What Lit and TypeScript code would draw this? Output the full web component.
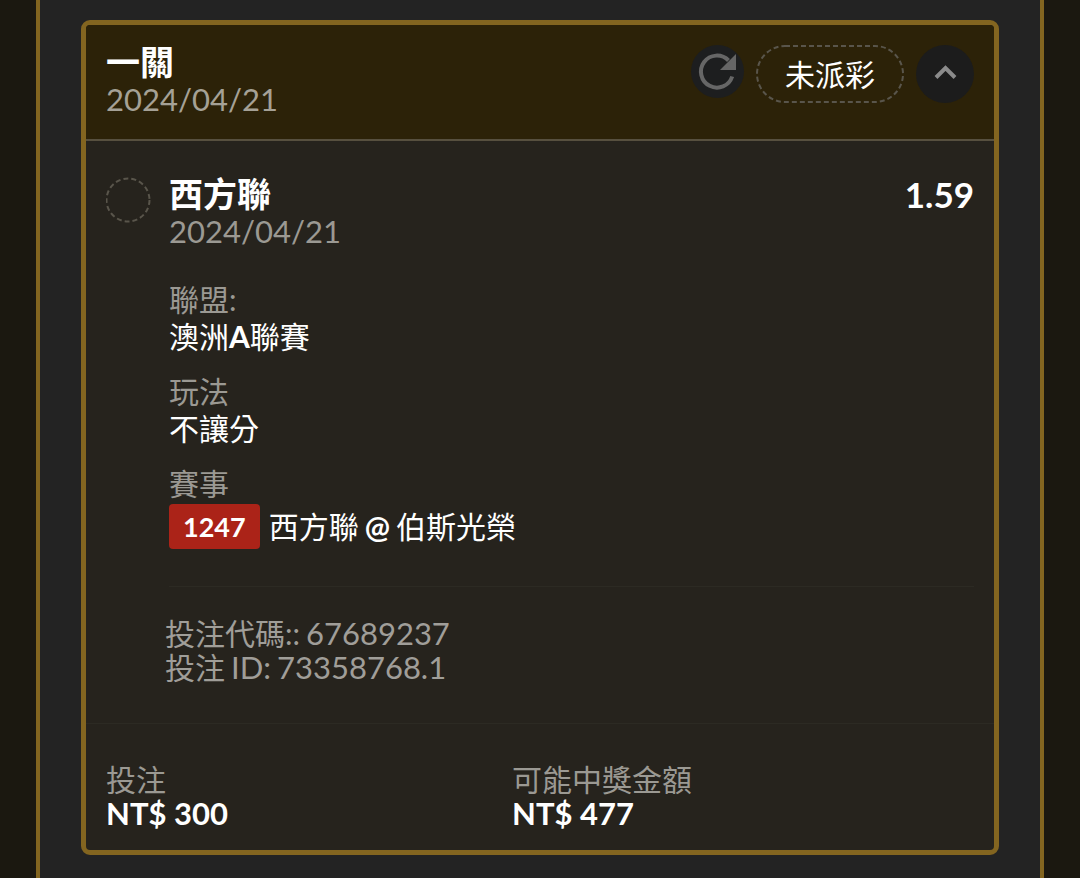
import { LitElement, html, css } from "lit";
import { customElement, property, state } from "lit/decorators.js";

interface Leg {
  team: string;
  date: string;
  odds: string;
  code: string;
  home: string;
  away: string;
}

@customElement("bet-card")
class BetCard extends LitElement {
  static styles = css`
    :host {
      display: block;
      box-sizing: border-box;
      border: 5px solid #836520;
      border-radius: 9px;
      background: #26231d;
      color: #fff;
      overflow: hidden;
    }
    * {
      box-sizing: border-box;
    }
    h2,
    h3,
    p,
    dl,
    dd {
      margin: 0;
    }
    .header {
      display: flex;
      justify-content: space-between;
      align-items: flex-start;
      padding: 20px;
      background: #2c2208;
      border-bottom: 2px solid #57503f;
    }
    .title {
      font-size: 34px;
      line-height: 34px;
      font-weight: 700;
    }
    .date {
      font-size: 31px;
      line-height: 40px;
      color: #a5a196;
    }
    .leg .date {
      color: #9b9993;
    }
    .actions {
      display: flex;
      align-items: flex-start;
      gap: 12px;
    }
    button {
      display: flex;
      align-items: center;
      justify-content: center;
      padding: 0;
      border: 0;
      border-radius: 50%;
      cursor: pointer;
    }
    .refresh {
      width: 53px;
      height: 53px;
      background: #1d1e1f;
    }
    .toggle {
      width: 58px;
      height: 58px;
      background: #1c1c1c;
    }
    .toggle.closed svg {
      transform: rotate(180deg);
    }
    .outline {
      fill: none;
      stroke: #59554b;
      stroke-width: 2;
      stroke-dasharray: 5 3;
    }
    .status {
      position: relative;
      display: flex;
      align-items: center;
      height: 58px;
      padding: 0 29px;
      font-size: 30px;
      line-height: 34px;
    }
    .status .frame {
      position: absolute;
      inset: 0;
      width: 100%;
      height: 100%;
    }
    .status .outline {
      x: 1px;
      y: 1px;
      width: calc(100% - 2px);
      height: calc(100% - 2px);
    }
    .leg {
      display: grid;
      grid-template-columns: 44px 1fr;
      column-gap: 19px;
      padding: 36px 20px 39px;
    }
    .mark {
      width: 46px;
      height: 46px;
    }
    .leg-head {
      display: flex;
      justify-content: space-between;
    }
    .odds {
      font-size: 35px;
      line-height: 34px;
      font-weight: 700;
    }
    .details {
      display: grid;
      row-gap: 18px;
      margin-top: 30px;
      padding-bottom: 37px;
      border-bottom: 1px solid #2c2a23;
    }
    dt {
      font-size: 30px;
      line-height: 37px;
      color: #9b9993;
    }
    dd {
      font-size: 30px;
      line-height: 37px;
    }
    .latin {
      font-weight: 700;
    }
    .match {
      display: flex;
      align-items: center;
      gap: 6px;
      margin-top: 2px;
      line-height: 45px;
    }
    .code {
      margin-right: 3px;
      padding: 0 14px;
      border-radius: 4px;
      background: #ab2318;
      font-size: 27px;
      font-weight: 700;
    }
    .ids {
      grid-column: 2;
      margin: 29px 0 0 -4px;
      font-size: 30px;
      line-height: 34px;
      color: #a09e99;
    }
    .ids p {
      display: flex;
      align-items: baseline;
      gap: 6px;
    }
    .num {
      font-size: 31px;
    }
    .totals {
      display: grid;
      grid-template-columns: 406px 1fr;
      padding: 38px 20px 20px;
      border-top: 1px solid #2c2a23;
    }
    .totals dt,
    .totals dd {
      line-height: 34px;
    }
    .totals dd {
      font-size: 31px;
      font-weight: 700;
    }
  `;

  @property() name = "";
  @property() date = "";
  @property() status = "";
  @property({ attribute: false }) leg!: Leg;
  @state() open = true;

  private toggle() {
    this.open = !this.open;
  }

  private renderLeg() {
    const { team, date, odds, code, home, away } = this.leg;
    return html`
      <section class="leg">
        <svg class="mark" viewBox="0 0 46 46" aria-hidden="true">
          <circle class="outline" cx="22" cy="23" r="21.5" />
        </svg>
        <div>
          <div class="leg-head">
            <div>
              <h3 class="title">${team}</h3>
              <p class="date">${date}</p>
            </div>
            <span class="odds">${odds}</span>
          </div>
          <dl class="details">
            <div>
              <dt>聯盟:</dt>
              <dd>澳洲<span class="latin">A</span>聯賽</dd>
            </div>
            <div>
              <dt>玩法</dt>
              <dd>不讓分</dd>
            </div>
            <div>
              <dt>賽事</dt>
              <dd class="match">
                <span class="code">${code}</span>
                <span>${home}</span>
                <span class="latin">@</span>
                <span>${away}</span>
              </dd>
            </div>
          </dl>
        </div>
        <div class="ids">
          <p><span>投注代碼::</span><span class="num">67689237</span></p>
          <p>
            <span>投注</span><span class="num">ID:</span
            ><span class="num">73358768.1</span>
          </p>
        </div>
      </section>
    `;
  }

  render() {
    return html`
      <header class="header">
        <div>
          <h2 class="title">${this.name}</h2>
          <p class="date">${this.date}</p>
        </div>
        <div class="actions">
          <button class="refresh" type="button" aria-label="重新整理">
            <svg width="53" height="53" viewBox="0 0 53 53" aria-hidden="true">
              <path
                d="M41.2 31.5A16 16 0 1 1 37.5 15.5"
                fill="none"
                stroke="#666"
                stroke-width="4"
              />
              <path d="M45 9V25H29Z" fill="#666" />
            </svg>
          </button>
          <span class="status">
            <svg class="frame" aria-hidden="true">
              <rect class="outline" rx="28" />
            </svg>
            ${this.status}
          </span>
          <button
            class="toggle ${this.open ? "" : "closed"}"
            type="button"
            aria-label="展開或收合"
            aria-expanded=${this.open}
            @click=${this.toggle}
          >
            <svg width="58" height="58" viewBox="0 0 58 58" aria-hidden="true">
              <path
                d="M20 32.5L29.5 23L39 32.5"
                fill="none"
                stroke="#8b8b8b"
                stroke-width="4"
              />
            </svg>
          </button>
        </div>
      </header>
      ${this.open ? this.renderLeg() : ""}
      <dl class="totals">
        <div>
          <dt>投注</dt>
          <dd>NT$ 300</dd>
        </div>
        <div>
          <dt>可能中獎金額</dt>
          <dd>NT$ 477</dd>
        </div>
      </dl>
    `;
  }
}

@customElement("app-root")
class AppRoot extends LitElement {
  static styles = css`
    :host {
      display: block;
      box-sizing: border-box;
      min-height: 100vh;
      padding: 0 36px;
      background: #1b1810;
      font-family: Lato, "Noto Sans CJK TC", sans-serif;
    }
    .panel {
      box-sizing: border-box;
      min-height: 100vh;
      padding: 20px 41px 23px;
      border: solid #836520;
      border-width: 0 4px;
      background: #232323;
    }
  `;

  private leg: Leg = {
    team: "西方聯",
    date: "2024/04/21",
    odds: "1.59",
    code: "1247",
    home: "西方聯",
    away: "伯斯光榮",
  };

  render() {
    return html`
      <main class="panel">
        <bet-card name="一關" date="2024/04/21" status="未派彩" .leg=${this.leg}></bet-card>
      </main>
    `;
  }
}
